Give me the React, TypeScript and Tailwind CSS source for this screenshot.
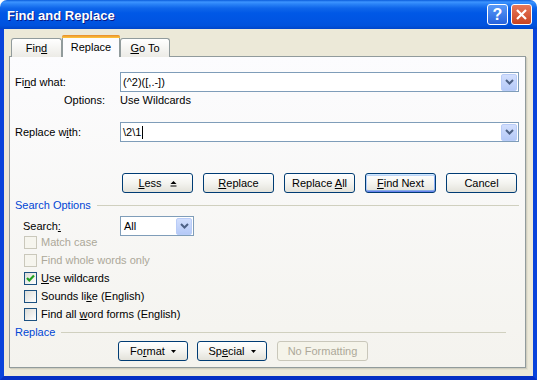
import React from "react";

function DropBtn() {
  return (
    <div className="w-[16px] h-[17px] rounded-[2px] border border-[#B9CCF7] bg-gradient-to-b from-[#D2DFFD] to-[#B5C9F7] flex items-center justify-center">
      <svg width="9" height="6" viewBox="0 0 9 6">
        <path d="M1 1 L4.5 4.5 L8 1" stroke="#4D6185" strokeWidth="2" fill="none" />
      </svg>
    </div>
  );
}

function Btn({
  className,
  children,
  def,
  disabled,
}: {
  className: string;
  children: React.ReactNode;
  def?: boolean;
  disabled?: boolean;
}) {
  if (disabled) {
    return (
      <div
        className={
          "h-[20px] rounded-[3px] border border-[#C9C7BA] bg-[#F5F4EA] text-[#ACA899] flex items-center justify-center " +
          className
        }
      >
        {children}
      </div>
    );
  }
  return (
    <div
      className={
        "h-[20px] rounded-[3px] border border-[#003C74] bg-gradient-to-b from-[#FFFFFF] via-[#F4F4F0] to-[#E3E2DA] flex items-center justify-center " +
        (def
          ? "shadow-[inset_0_1px_0_#CEE7FF,inset_0_-1px_0_#6982EE,inset_1px_0_0_#B2CCF8,inset_-1px_0_0_#8DAEF3,inset_0_2px_0_#BCD4F6,inset_0_-2px_0_#89ADE4] "
          : "") +
        className
      }
    >
      {children}
    </div>
  );
}

function Check({
  checked,
  disabled,
  children,
}: {
  checked?: boolean;
  disabled?: boolean;
  children: React.ReactNode;
}) {
  return (
    <div className="flex items-center h-[18px] pl-[9px] gap-[4px]">
      <div
        className={
          disabled
            ? "w-[13px] h-[13px] border border-[#CAC8BB] bg-[#F6F5EE] flex items-center justify-center"
            : "w-[13px] h-[13px] border border-[#1C5180] bg-gradient-to-br from-[#DCDCD7] to-[#FFFFFF] flex items-center justify-center"
        }
      >
        {checked && (
          <svg width="11" height="11" viewBox="0 0 11 11">
            <path d="M2 5 L4.3 7.5 L9 2.5" stroke="#21A121" strokeWidth="2.2" fill="none" />
          </svg>
        )}
      </div>
      <span className={disabled ? "text-[#ACA899]" : ""}>{children}</span>
    </div>
  );
}

export default function App() {
  return (
    <div className="w-[537px] h-[380px] flex flex-col font-['Tahoma','Liberation_Sans',sans-serif] text-[11px] text-black leading-none">
      {/* Title bar */}
      <div className="h-[29px] rounded-t-[7px] flex items-center pl-[7px] pr-[5px] pt-[2px] bg-[linear-gradient(to_bottom,#0A5CDB_0%,#3D95FF_7%,#2A83F7_14%,#0F66EA_28%,#0058E6_45%,#0055E3_70%,#0052DD_88%,#0045C9_100%)]">
        <span className="font-['Liberation_Sans',sans-serif] font-bold text-[13px] text-white [text-shadow:1px_1px_0_#0A1883]">
          Find and Replace
        </span>
        <div className="ml-auto flex gap-[3px] -mt-[2px]">
          <div className="w-[21px] h-[21px] rounded-[3px] border border-white bg-gradient-to-b from-[#5A9AF8] to-[#2762DC] flex items-center justify-center">
            <span className="font-['Liberation_Sans',sans-serif] font-bold text-[16px] text-white leading-none">?</span>
          </div>
          <div className="w-[21px] h-[21px] rounded-[3px] border border-white bg-gradient-to-b from-[#E8785A] to-[#C9431F] flex items-center justify-center">
            <svg width="13" height="13" viewBox="0 0 13 13">
              <path d="M2 2 L11 11 M11 2 L2 11" stroke="white" strokeWidth="2.2" />
            </svg>
          </div>
        </div>
      </div>

      {/* Body */}
      <div className="flex-1 flex flex-col border-x-4 border-b-4 border-x-[#0843DB] border-b-[#0530C4] bg-[#ECE9D8] pl-[5px] pr-[7px] pt-[7px] pb-[8px]">
        {/* Tabs */}
        <div className="h-[21px] flex items-end pl-[2px] relative z-10 -mb-[1px]">
          <div className="w-[51px] h-[19px] border border-b-0 border-[#919B9C] rounded-t-[3px] bg-gradient-to-b from-[#FFFFFF] to-[#ECEBE6] flex items-center justify-center">
            <span>
              Fin<span className="underline">d</span>
            </span>
          </div>
          <div className="w-[58px] h-[22px] border-x border-[#919B9C] rounded-t-[3px] bg-[#FCFCFE] flex flex-col">
            <div className="h-[3px] rounded-t-[2px] bg-gradient-to-b from-[#E68B2C] to-[#FFC73C] -mx-[1px]" />
            <div className="flex-1 flex items-center justify-center pb-[1px]">Replace</div>
          </div>
          <div className="w-[50px] h-[19px] border border-b-0 border-[#919B9C] rounded-t-[3px] bg-gradient-to-b from-[#FFFFFF] to-[#ECEBE6] flex items-center justify-center">
            <span>
              <span className="underline">G</span>o To
            </span>
          </div>
        </div>

        {/* Panel */}
        <div className="flex-1 border border-[#919B9C] bg-gradient-to-b from-[#FCFCFE] to-[#F4F3EE] shadow-[1px_1px_0_#D0CEBF,2px_2px_0_#E3E0D0] flex flex-col pl-[5px] pr-[6px]">
          {/* Find what */}
          <div className="flex items-center h-[20px] mt-[15px]">
            <div className="w-[105px]">
              Fi<span className="underline">n</span>d what:
            </div>
            <div className="flex-1 h-[20px] border border-[#7F9DB9] bg-white flex items-center pl-[2px] pr-[1px]">
              <span className="flex-1">(^2)([,.-])</span>
              <DropBtn />
            </div>
          </div>
          {/* Options */}
          <div className="flex items-center h-[16px]">
            <div className="w-[105px] pl-[49px]">Options:</div>
            <div>Use Wildcards</div>
          </div>
          {/* Replace with */}
          <div className="flex items-center h-[20px] mt-[14px]">
            <div className="w-[105px]">
              Replace w<span className="underline">i</span>th:
            </div>
            <div className="flex-1 h-[20px] border border-[#7F9DB9] bg-white flex items-center pl-[2px] pr-[1px]">
              <span className="flex-1 flex items-center">
                \2\1<span className="inline-block w-px h-[13px] bg-black ml-[1px]" />
              </span>
              <DropBtn />
            </div>
          </div>
          {/* Buttons */}
          <div className="flex h-[20px] mt-[31px] pl-[107px] gap-[10px]">
            <Btn className="w-[71px]">
              <span className="flex items-center gap-[8px]">
                <span>
                  <span className="underline">L</span>ess
                </span>
                <svg width="7" height="7" viewBox="0 0 7 7">
                  <path d="M0.5 4 L3.5 1 L6.5 4 Z" fill="black" />
                  <rect x="0.5" y="5.5" width="6" height="1" fill="black" />
                </svg>
              </span>
            </Btn>
            <Btn className="w-[71px]">
              <span>
                <span className="underline">R</span>eplace
              </span>
            </Btn>
            <Btn className="w-[71px]">
              <span>
                Replace <span className="underline">A</span>ll
              </span>
            </Btn>
            <Btn className="w-[71px]" def>
              <span>
                <span className="underline">F</span>ind Next
              </span>
            </Btn>
            <Btn className="w-[71px]">Cancel</Btn>
          </div>
          {/* Search Options */}
          <div className="flex items-center h-[14px] mt-[5px]">
            <span className="text-[#0046D5]">Search Options</span>
            <div className="flex-1 h-px bg-[#D0D0BF] ml-[6px]" />
          </div>
          {/* Search */}
          <div className="flex items-start h-[17px] mt-[4px] relative z-10">
            <div className="w-[105px] pl-[8px] h-[20px] flex items-center">
              <span>
                Search<span className="underline">:</span>
              </span>
            </div>
            <div className="w-[74px] h-[20px] border border-[#7F9DB9] bg-white flex items-center pl-[3px] pr-[1px]">
              <span className="flex-1">All</span>
              <DropBtn />
            </div>
          </div>
          {/* Checkboxes */}
          <div className="flex flex-col">
            <Check disabled>Match case</Check>
            <Check disabled>Find whole words only</Check>
            <Check checked>
              <span className="underline">U</span>se wildcards
            </Check>
            <Check>
              Sounds li<span className="underline">k</span>e (English)
            </Check>
            <Check>
              Find all <span className="underline">w</span>ord forms (English)
            </Check>
          </div>
          {/* Replace group */}
          <div className="flex items-center h-[14px] mt-[2px]">
            <span className="text-[#0046D5]">Replace</span>
            <div className="flex-1 h-px bg-[#D0D0BF] ml-[6px] mr-[13px]" />
          </div>
          <div className="flex h-[20px] mt-[2px] pl-[103px]">
            <Btn className="w-[70px]">
              <span className="flex items-center gap-[6px]">
                <span>
                  Fo<span className="underline">r</span>mat
                </span>
                <svg width="5" height="3" viewBox="0 0 5 3">
                  <path d="M0 0 L5 0 L2.5 3 Z" fill="black" />
                </svg>
              </span>
            </Btn>
            <Btn className="w-[70px] ml-[9px]">
              <span className="flex items-center gap-[6px]">
                <span>
                  Sp<span className="underline">e</span>cial
                </span>
                <svg width="5" height="3" viewBox="0 0 5 3">
                  <path d="M0 0 L5 0 L2.5 3 Z" fill="black" />
                </svg>
              </span>
            </Btn>
            <Btn className="w-[91px] ml-[10px]" disabled>
              No Formatting
            </Btn>
          </div>
        </div>
      </div>
    </div>
  );
}
